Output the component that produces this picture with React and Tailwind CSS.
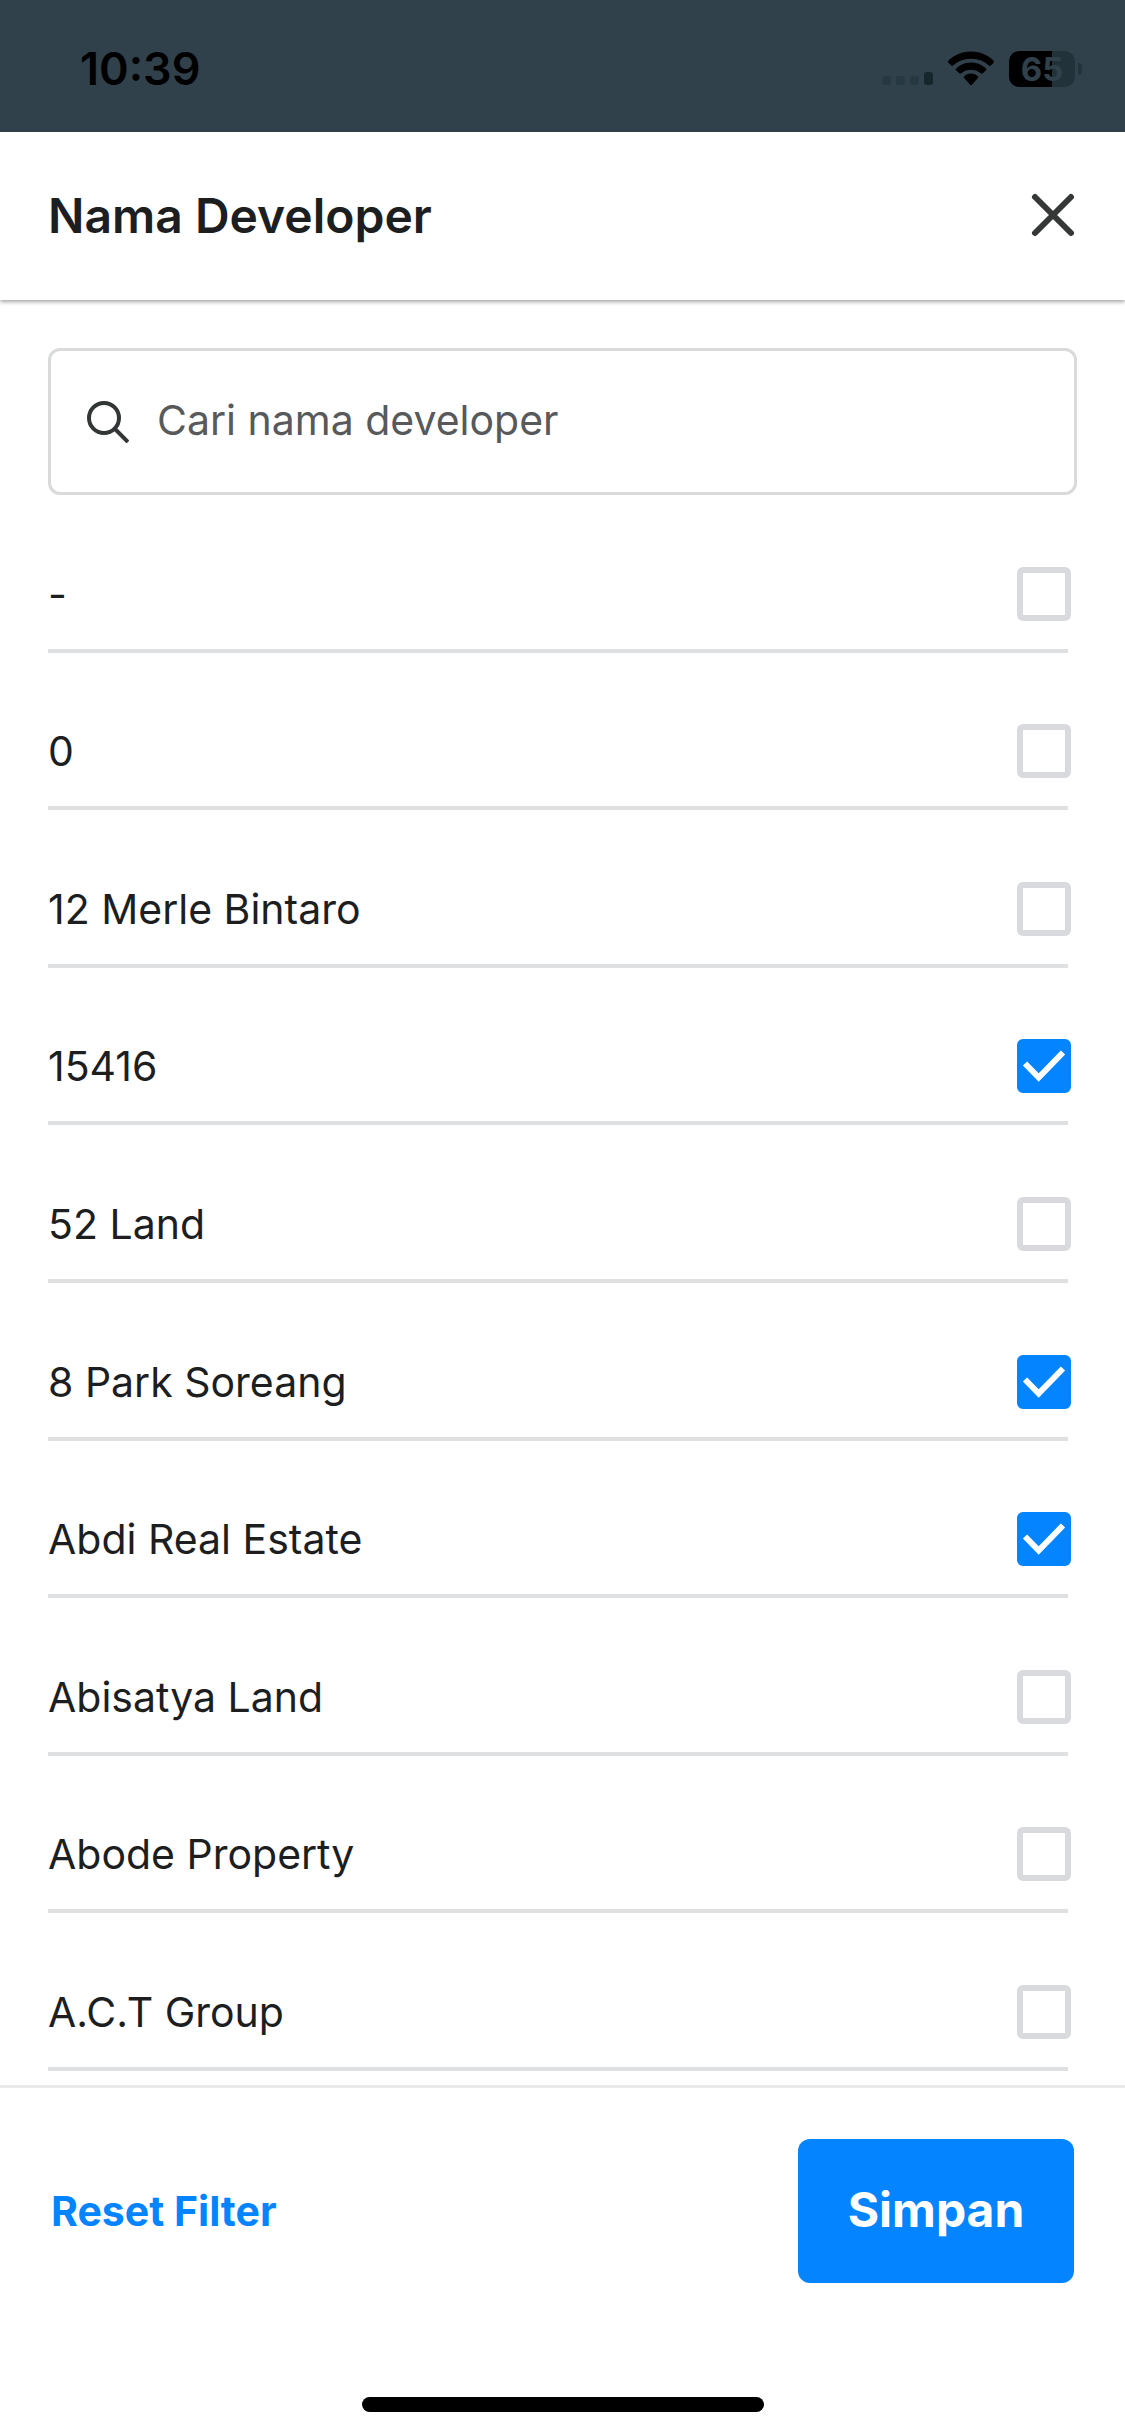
import React, { useState } from "react";

const developers = [
  "-",
  "0",
  "12 Merle Bintaro",
  "15416",
  "52 Land",
  "8 Park Soreang",
  "Abdi Real Estate",
  "Abisatya Land",
  "Abode Property",
  "A.C.T Group",
];

const defaultSelected = ["15416", "8 Park Soreang", "Abdi Real Estate"];

const StatusBar = () => (
  <div className="flex h-[132px] items-center justify-between bg-[#31414b] pt-[6px] pr-[43px] pl-20">
    <span className="text-[45px] leading-[54px] font-semibold text-black">
      10:39
    </span>
    <div className="flex items-center gap-[15px]">
      <svg className="h-9 w-[51px]" viewBox="0 0 51 36" aria-hidden="true">
        <rect x="0" y="25" width="9" height="9" rx="3" fill="#263842" />
        <rect x="14" y="25" width="9" height="9" rx="3" fill="#263842" />
        <rect x="28" y="25" width="9" height="9" rx="3" fill="#263842" />
        <rect x="42" y="21" width="9" height="13" rx="3" fill="#15262d" />
      </svg>
      <svg
        className="h-9 w-[46px]"
        viewBox="0 0 46 36"
        stroke="#000"
        strokeWidth="1"
        aria-hidden="true"
      >
        <path d="M23 1C14.300 1 6.400 4.400 0.600 9.900a1 1 0 0 0 0 1.500l2.800 2.800a1 1 0 0 0 1.400 0A26.400 26.400 0 0 1 23 7.200a26.400 26.400 0 0 1 18.200 7 1 1 0 0 0 1.400 0l2.800-2.800a1 1 0 0 0 0-1.500C39.600 4.400 31.700 1 23 1Z" />
        <path d="M23 12c-5.600 0-10.700 2.100-14.500 5.600a1 1 0 0 0 0 1.500l2.900 2.900a1 1 0 0 0 1.400 0A15 15 0 0 1 23 18.200 15 15 0 0 1 33.200 22a1 1 0 0 0 1.400 0l2.900-2.900a1 1 0 0 0 0-1.500A21.400 21.400 0 0 0 23 12Z" />
        <path d="M23 23c-2.500 0-4.800.9-6.500 2.300a1 1 0 0 0 0 1.500l5.800 6.700a1 1 0 0 0 1.400 0l5.800-6.700a1 1 0 0 0 0-1.500A10.300 10.300 0 0 0 23 23Z" />
      </svg>
      <div className="flex items-center gap-[3px]">
        <div className="flex h-9 w-[66px] items-center justify-center rounded-[10px] bg-linear-to-r from-black from-65% to-[#22323a] to-65% text-[33px] leading-9 font-bold text-[#31414b]">
          65
        </div>
        <div className="h-3 w-1 rounded-r-full bg-[#22323a]" />
      </div>
    </div>
  </div>
);

const DeveloperRow = ({ name, checked, onToggle }) => (
  <li className="flex min-h-[120px] flex-1 flex-col justify-end">
    <label className="flex items-center justify-between pb-7">
      <span className="text-[41px] leading-[54px]">{name}</span>
      <span className="grid">
        <input
          type="checkbox"
          checked={checked}
          onChange={onToggle}
          className="col-start-1 row-start-1 h-[54px] w-[54px] appearance-none rounded-md border-6 border-[#d8dadd] bg-white checked:border-[#0484ff] checked:bg-[#0484ff]"
        />
        {checked && (
          <svg
            className="pointer-events-none col-start-1 row-start-1 h-[54px] w-[54px]"
            viewBox="0 0 54 54"
            fill="none"
            aria-hidden="true"
          >
            <path d="M8 24.500 21.700 38.500 46 13.500" stroke="#fff" strokeWidth="6" />
          </svg>
        )}
      </span>
    </label>
    <div className="mr-[3px] h-1 bg-[#dfe0e2]" />
  </li>
);

const App = () => {
  const [selected, setSelected] = useState(defaultSelected);
  const [search, setSearch] = useState("");

  const toggle = (name) => {
    setSelected(
      selected.includes(name)
        ? selected.filter((item) => item !== name)
        : [...selected, name]
    );
  };

  const visible = developers.filter((name) =>
    name.toLowerCase().includes(search.toLowerCase())
  );

  return (
    <div className="flex min-h-screen flex-col bg-white font-[Inter,sans-serif] text-[#1d1e1f]">
      <StatusBar />

      {/* Header */}
      <header className="flex h-[168px] items-center justify-between px-12 shadow-[0_2px_4px_rgba(0,0,0,0.35)]">
        <h1 className="text-[48px] leading-[60px] font-semibold">
          Nama Developer
        </h1>
        <button type="button" aria-label="Tutup">
          <svg
            className="h-12 w-12"
            viewBox="0 0 48 48"
            fill="none"
            stroke="#363838"
            strokeWidth="6"
            strokeLinecap="round"
          >
            <path d="M6 5 42 41M42 5 6 41" />
          </svg>
        </button>
      </header>

      <main className="flex flex-1 flex-col">
        {/* Search */}
        <div className="px-12 pt-12">
          <label className="flex h-[147px] items-center gap-7 rounded-xl border-3 border-[#d8dadc] px-9">
            <svg
              className="h-[42px] w-[42px] shrink-0"
              viewBox="0 0 42 42"
              fill="none"
              stroke="#333636"
              strokeWidth="4"
              aria-hidden="true"
            >
              <circle cx="17" cy="17" r="15" />
              <path d="M27.500 27.500 41 41" />
            </svg>
            <input
              type="text"
              value={search}
              onChange={(e) => setSearch(e.target.value)}
              placeholder="Cari nama developer"
              aria-label="Cari nama developer"
              className="w-full pb-[3px] text-[41px] leading-[54px] outline-none placeholder:text-[#57595b]"
            />
          </label>
        </div>

        {/* List */}
        <ul className="flex flex-1 flex-col pr-[54px] pb-[14px] pl-12">
          {visible.map((name) => (
            <DeveloperRow
              key={name}
              name={name}
              checked={selected.includes(name)}
              onToggle={() => toggle(name)}
            />
          ))}
        </ul>
      </main>

      {/* Actions */}
      <footer className="border-t-3 border-[#e8eaea] pb-6">
        <div className="flex items-center justify-between px-[51px] pt-[51px]">
          <button
            type="button"
            onClick={() => setSelected([])}
            className="text-[41px] leading-[54px] font-bold text-[#0484ff]"
          >
            Reset Filter
          </button>
          <button
            type="button"
            className="h-36 min-w-[276px] rounded-xl bg-[#0484ff] px-12 pb-[3px] text-[48px] leading-[60px] font-bold text-white"
          >
            Simpan
          </button>
        </div>
        <div className="mx-auto mt-[114px] h-[15px] w-[402px] rounded-full bg-black" />
      </footer>
    </div>
  );
};

export default App;
